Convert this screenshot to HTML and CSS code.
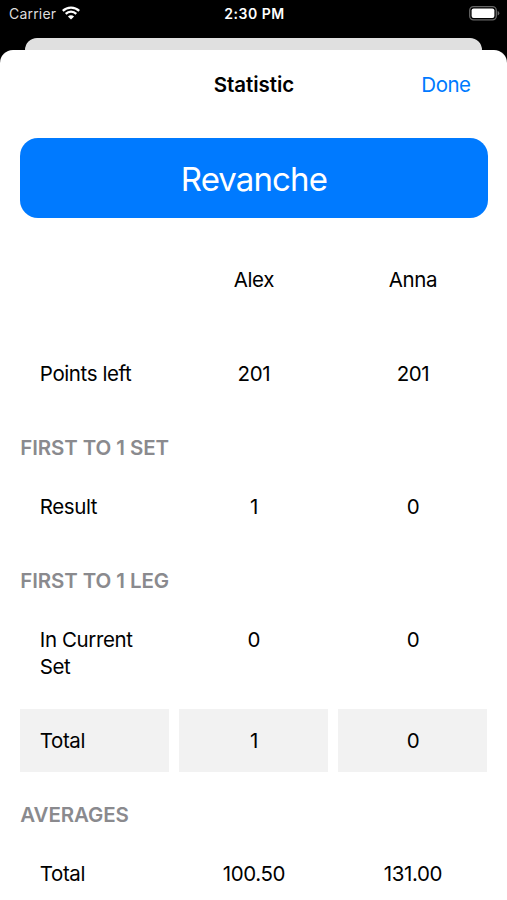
FILE: index.html
```html
<!DOCTYPE html>
<html lang="en">
<head>
<meta charset="utf-8">
<title>Statistic</title>
<link rel="stylesheet" href="styles.css">
</head>
<body>
<div class="status">
  <div class="carrier"><span class="carrier-name">Carrier</span>
    <svg class="wifi" width="18" height="14" viewBox="0 0 18 14" fill="none" stroke="#fff" stroke-width="2.2">
      <path d="M.8 4.9C5.3.4 12.700.4 17.200 4.900M3.700 7.900C6.700 4.900 11.300 4.900 14.300 7.900"/>
      <path d="M9 13.500 5.900 10.400Q9 7.900 12.100 10.400Z" fill="#fff" stroke="none"/>
    </svg>
  </div>
  <span class="clock">2:30 PM</span>
  <svg class="battery" width="31" height="15" viewBox="0 0 31 15">
    <rect x=".7" y=".7" width="26.600" height="13.200" rx="3.800" fill="none" stroke="#666" stroke-width="1.300"/>
    <rect x="2.600" y="2.600" width="22.800" height="9.400" rx="2" fill="#fff"/>
    <path d="M28.600 5v4.600Q30.300 9 30.300 7.300T28.600 5Z" fill="#666"/>
  </svg>
</div>
<div class="back-sheet"></div>
<main class="sheet">
  <header class="nav">
    <h1 class="title">Statistic</h1>
    <a class="done">Done</a>
  </header>
  <button class="revanche">Revanche</button>
  <div class="row names"><span class="cell"></span><span class="cell">Alex</span><span class="cell">Anna</span></div>
  <div class="row"><span class="cell label">Points left</span><span class="cell">201</span><span class="cell">201</span></div>
  <h2 class="section">FIRST TO 1 SET</h2>
  <div class="row"><span class="cell label">Result</span><span class="cell">1</span><span class="cell">0</span></div>
  <h2 class="section">FIRST TO 1 LEG</h2>
  <div class="row"><span class="cell label">In Current Set</span><span class="cell">0</span><span class="cell">0</span></div>
  <div class="row shaded"><span class="cell label">Total</span><span class="cell">1</span><span class="cell">0</span></div>
  <h2 class="section">AVERAGES</h2>
  <div class="row"><span class="cell label">Total</span><span class="cell">100.50</span><span class="cell">131.00</span></div>
</main>
</body>
</html>
```

FILE: styles.css
```css
* { box-sizing: border-box; }
body {
  margin: 0;
  height: 900px;
  overflow: hidden;
  display: flex;
  flex-direction: column;
  background: #000;
  color: #000;
  font-family: Inter, "Liberation Sans", sans-serif;
  font-size: 20.5px;
  letter-spacing: -0.4px;
}
.status {
  flex: none;
  height: 38px;
  padding: 0 7px 11px 9px;
  display: grid;
  grid-template-columns: 1fr auto 1fr;
  align-items: center;
  color: #fff;
  font-size: 14px;
  letter-spacing: 0.2px;
}
.carrier { display: flex; align-items: center; gap: 6px; color: #ddd; }
.wifi { margin-top: -2px; }
.clock { font-weight: 600; letter-spacing: 0.5px; }
.battery { justify-self: end; margin-top: -1px; }
.back-sheet {
  flex: none;
  height: 12px;
  margin: 0 25px;
  background: #e0e0e0;
  border-radius: 12px 12px 0 0;
}
.sheet {
  flex: 1;
  padding: 0 19.5px 0 20.3px;
  background: #fff;
  border-radius: 13px 13px 0 0;
}
.nav {
  height: 88px;
  padding: 0 17px 19px 0;
  display: grid;
  grid-template-columns: 1fr auto 1fr;
  align-items: center;
}
.title { grid-column: 2; margin: 0 -17px 0 0; font-size: 20.5px; font-weight: 600; letter-spacing: -0.05px; }
.done { justify-self: end; color: #007aff; letter-spacing: -0.5px; }
.revanche {
  display: block;
  width: 100%;
  height: 80px;
  margin: 0 0 30px;
  padding: 1px 0 0;
  border: 0;
  border-radius: 18px;
  background: #007aff;
  color: #fff;
  font: 400 33px Inter, "Liberation Sans", sans-serif;
  letter-spacing: -0.9px;
}
.row {
  display: grid;
  grid-template-columns: repeat(3, 1fr);
  gap: 10px;
  line-height: 27px;
}
.cell { min-height: 63.5px; padding: 18px 19.5px 18.4px; text-align: center; }
.label { text-align: left; }
.names { margin-bottom: 30.5px; }
.section {
  height: 69.6px;
  margin: 0;
  padding-top: 28.5px;
  line-height: 27px;
  font-size: 20.5px;
  font-weight: 600;
  letter-spacing: -0.1px;
  color: #8a8a8e;
}
.shaded { margin-top: 10px; }
.shaded .cell { background: #f2f2f2; }
```
